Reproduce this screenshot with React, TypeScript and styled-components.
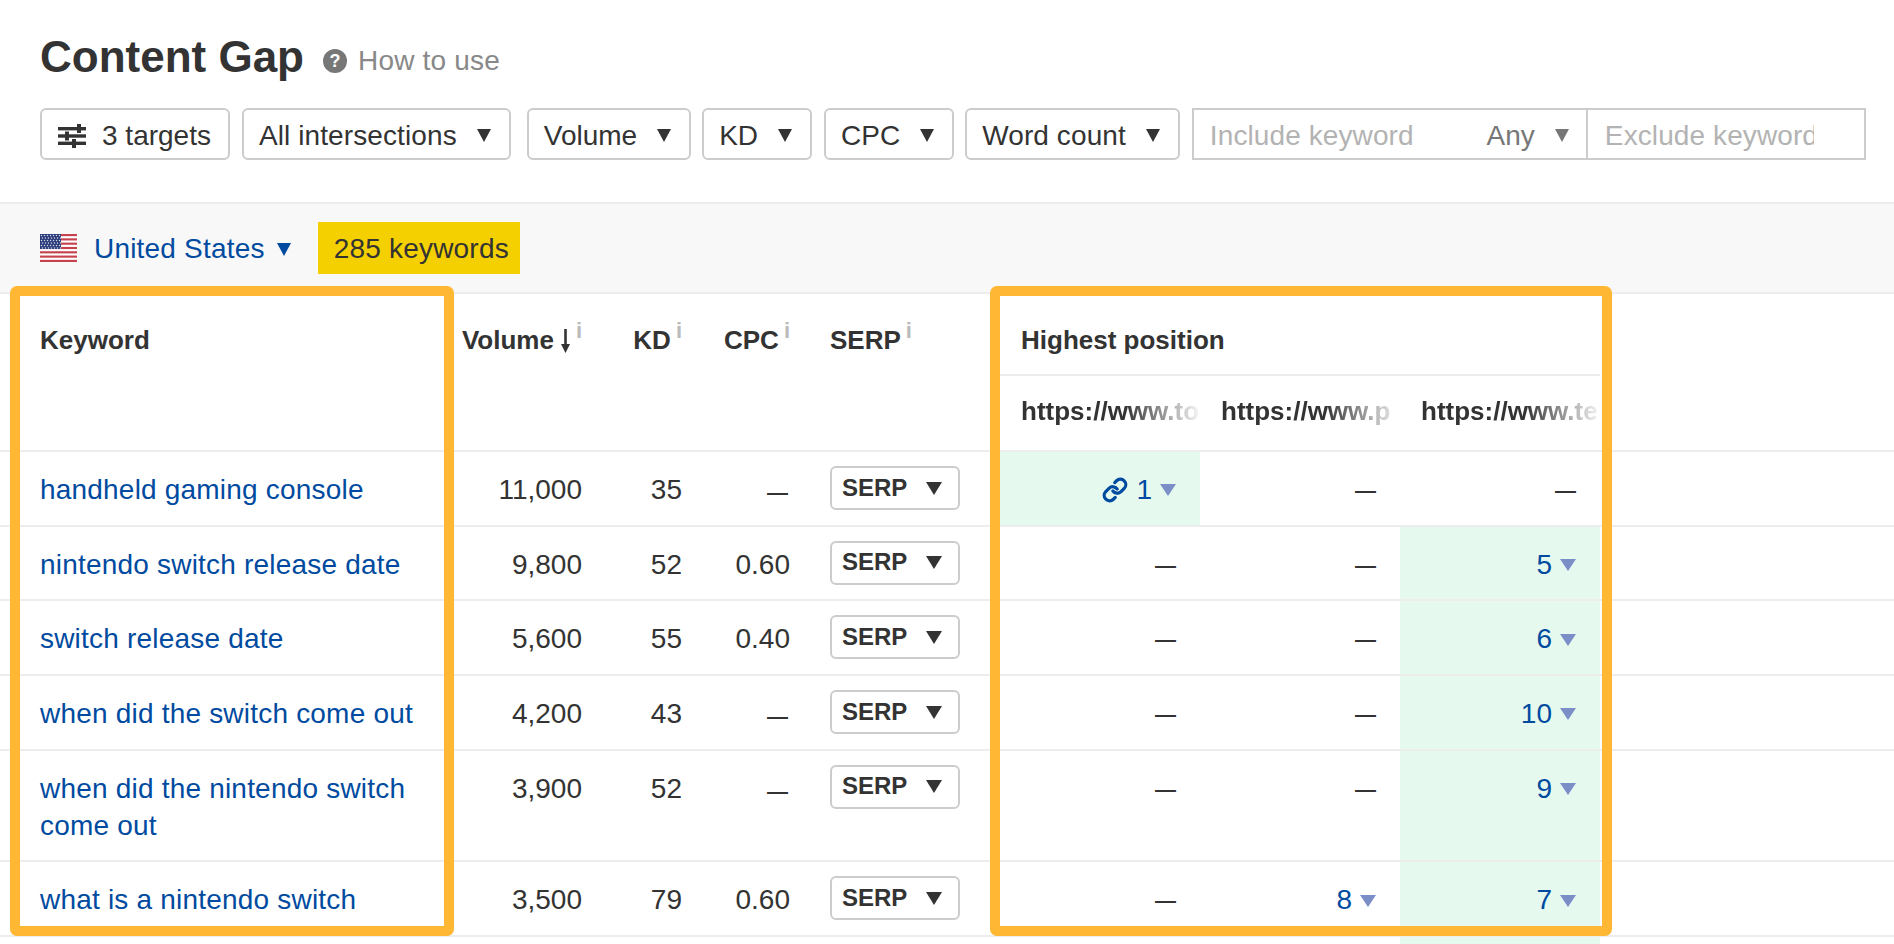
import React from 'react'
import styled, { createGlobalStyle } from 'styled-components'
import { Link as LinkIcon } from 'lucide-react'

const GlobalStyle = createGlobalStyle`
  html, body {
    margin: 0;
    padding: 0;
    height: 100%;
    overflow: hidden;
    background: #fff;
    font-family: "Liberation Sans", Arial, sans-serif;
    color: #333;
  }
`

const Page = styled.div`
  position: relative;
  width: 100%;
  height: 944px;
  overflow: hidden;
  font-size: 28px;
  letter-spacing: 0.2px;
`

const Header = styled.header`
  height: 170px;
  padding: 32px 0 0 40px;
  border-bottom: 2px solid #ededed;
`

const TitleRow = styled.div`
  display: flex;
  align-items: center;
  height: 50px;
`

const Title = styled.h1`
  margin: 0 19px 0 0;
  font-size: 44px;
  line-height: 50px;
  font-weight: 700;
  letter-spacing: 0;
  color: #333;
`

const HelpDot = styled.span`
  display: flex;
  align-items: center;
  justify-content: center;
  width: 24px;
  height: 24px;
  margin: 8px 11px 0 0;
  border-radius: 50%;
  background: #777;
  color: #fff;
  font-size: 18px;
  font-weight: 700;
`

const HowTo = styled.span`
  margin-top: 8px;
  color: #888;
`

const Filters = styled.div`
  display: flex;
  margin-top: 26px;
  letter-spacing: 0;
`

const FilterButton = styled.div<{ $gap?: number; $tracking?: number }>`
  display: flex;
  align-items: center;
  gap: 20px;
  height: 52px;
  box-sizing: border-box;
  padding: 3px 18px 0 15px;
  margin-right: ${(p) => p.$gap ?? 12}px;
  background: #fff;
  border: 2px solid #ccc;
  border-radius: 6px;
  white-space: nowrap;
  letter-spacing: ${(p) => p.$tracking ?? 0}px;
`

const TargetsButton = styled(FilterButton)`
  gap: 15px;
  padding: 3px 17px 0 16px;
`

const Caret = styled.span<{ $color?: string; $w?: number; $h?: number }>`
  flex: none;
  width: 0;
  height: 0;
  border-left: ${(p) => (p.$w ?? 15) / 2}px solid transparent;
  border-right: ${(p) => (p.$w ?? 15) / 2}px solid transparent;
  border-top: ${(p) => p.$h ?? 13}px solid ${(p) => p.$color ?? '#333'};
`

const CountryCaret = styled(Caret)`
  margin-top: 3px;
`

const KeywordFilter = styled.div`
  display: flex;
  width: 674px;
  height: 52px;
  box-sizing: border-box;
  border: 2px solid #ccc;
`

const IncludePart = styled.div`
  display: flex;
  align-items: center;
  width: 394px;
  flex: none;
  box-sizing: border-box;
  padding: 3px 17px 0 16px;
  border-right: 2px solid #ccc;
`

const Placeholder = styled.span`
  color: #b3b3b3;
  white-space: nowrap;
  letter-spacing: 0.1px;
`

const AnySelect = styled.span`
  display: flex;
  align-items: center;
  gap: 20px;
  margin-left: auto;
  color: #777;
`

const ExcludePart = styled.div`
  display: flex;
  align-items: center;
  width: 209px;
  margin-left: 17px;
  padding-top: 3px;
  overflow: hidden;
`

const Band = styled.div`
  display: flex;
  align-items: center;
  height: 88px;
  padding-left: 40px;
  background: #f8f8f8;
  border-bottom: 2px solid #ededed;
`

const Country = styled.span`
  display: flex;
  align-items: center;
  color: #004ba0;
`

const CountryName = styled.span`
  margin: 2px 12px 0 17px;
`

const KeywordCount = styled.span`
  display: flex;
  align-items: center;
  height: 52px;
  box-sizing: border-box;
  margin-left: 27px;
  padding: 2px 11px 0 16px;
  background: #f5d000;
`

const columns = '460px 140px 100px 108px 192px 200px 200px 200px 1fr'

const HeadGrid = styled.div`
  display: grid;
  grid-template-columns: ${columns};
  grid-template-rows: 82px 74px;
  border-bottom: 2px solid #ededed;
  font-size: 26px;
  font-weight: 700;
  line-height: 36.7px;
  letter-spacing: 0;
`

const HeadCell = styled.div<{ $align?: 'left' | 'right' }>`
  grid-row: 1 / span 2;
  display: flex;
  align-items: flex-start;
  justify-content: ${(p) => (p.$align === 'left' ? 'flex-start' : 'flex-end')};
  padding: 28px ${(p) => (p.$align === 'left' ? 0 : 18)}px 0 ${(p) => (p.$align === 'left' ? 22 : 0)}px;
`

const KeywordHead = styled(HeadCell)`
  padding-left: 40px;
`

const GroupHead = styled.div`
  grid-row: 1;
  grid-column: 6 / span 3;
  padding: 28px 0 0 21px;
  border-bottom: 2px solid #ededed;
`

const UrlHead = styled.div<{ $col: number }>`
  grid-row: 2;
  grid-column: ${(p) => p.$col};
  padding: 17px 0 0 21px;
  overflow: hidden;
  white-space: nowrap;
`

const UrlText = styled.span`
  display: block;
  mask-image: linear-gradient(to right, #000 58%, rgba(0, 0, 0, 0.04) 100%);
`

const InfoMark = styled.span`
  margin: -3px 0 0 5px;
  font-size: 22px;
  line-height: 24px;
  font-weight: 700;
  color: #bbb;
`

const SortArrow = styled.svg`
  width: 11px;
  height: 24px;
  margin: 7px 0 0 6px;
  flex: none;
`

const Row = styled.div`
  display: grid;
  grid-template-columns: ${columns};
  border-bottom: 2px solid #ededed;
  line-height: 36.7px;
`

const KeywordCell = styled.a`
  padding: 20px 20px 16px 40px;
  color: #004ba0;
`

const NumberCell = styled.div`
  padding: 20px 18px 16px 0;
  text-align: right;
  letter-spacing: 0;
`

const Dash = styled.span`
  font-size: 21px;
  line-height: 1;
  font-weight: 700;
  letter-spacing: 0;
  margin-right: 2px;
`

const PositionDash = styled(Dash)`
  margin-right: 0;
  line-height: 36.7px;
`

const SerpCell = styled.div`
  padding: 14px 0 0 22px;
`

const SerpButton = styled.div`
  display: flex;
  align-items: center;
  justify-content: space-between;
  width: 130px;
  height: 44px;
  box-sizing: border-box;
  padding: 0 16px 0 10px;
  border: 2px solid #ccc;
  border-radius: 6px;
  font-size: 24px;
  font-weight: 700;
  letter-spacing: 0;
`

const PositionCell = styled.div<{ $best?: boolean }>`
  display: flex;
  justify-content: flex-end;
  align-items: flex-start;
  min-height: 72.7px;
  box-sizing: border-box;
  padding: 20px 24px 16px 0;
  letter-spacing: 0;
  background: ${(p) => (p.$best ? '#e6f9ef' : 'transparent')};
`

const PositionValue = styled.span`
  display: flex;
  align-items: center;
  gap: 8px;
  height: 36.7px;
  color: #004ba0;
`

const PositionLink = styled(LinkIcon)`
  color: #004ba0;
`

const Highlight = styled.div<{ $left: number; $width: number }>`
  position: absolute;
  top: 286px;
  left: ${(p) => p.$left}px;
  width: ${(p) => p.$width}px;
  height: 650px;
  box-sizing: border-box;
  border: 10px solid rgba(255, 181, 45, 0.97);
  border-radius: 7px;
  pointer-events: none;
`

const FLAG_STRIPES = [0, 2, 4, 6, 8, 10, 12]

function UsFlag() {
  return (
    <svg width="37" height="28" viewBox="0 0 37 28" aria-hidden="true">
      <rect width="37" height="28" fill="#fff" />
      {FLAG_STRIPES.map((s) => (
        <rect key={s} y={s * 2.154} width="37" height="2.154" fill="#c4434f" />
      ))}
      <rect width="21" height="15" fill="#2b3a78" />
      {[1.5, 4, 6.500, 9, 11.500, 14].map((y, row) =>
        [1.5, 4.5, 7.5, 10.5, 13.5, 16.5, 19.5].map((x) => (
          <circle key={`${x}-${y}`} cx={x + (row % 2)} cy={y} r="0.75" fill="#d5d9ea" />
        )),
      )}
    </svg>
  )
}

function SlidersIcon() {
  return (
    <svg width="29" height="24" viewBox="0 0 29 24" fill="#333" aria-hidden="true">
      <rect x="0" y="3" width="28" height="3.4" />
      <rect x="0" y="10.3" width="28" height="3.4" />
      <rect x="0" y="17.6" width="28" height="3.4" />
      <rect x="19" y="0" width="4" height="9" />
      <rect x="7" y="7.5" width="4" height="9" />
      <rect x="14" y="15" width="4" height="9" />
    </svg>
  )
}

type Keyword = {
  name: string
  volume: string
  kd: string
  cpc: string | null
  positions: (number | null)[]
  linked?: boolean
}

const KEYWORDS: Keyword[] = [
  { name: 'handheld gaming console', volume: '11,000', kd: '35', cpc: null, positions: [1, null, null], linked: true },
  { name: 'nintendo switch release date', volume: '9,800', kd: '52', cpc: '0.60', positions: [null, null, 5] },
  { name: 'switch release date', volume: '5,600', kd: '55', cpc: '0.40', positions: [null, null, 6] },
  { name: 'when did the switch come out', volume: '4,200', kd: '43', cpc: null, positions: [null, null, 10] },
  { name: 'when did the nintendo switch come out', volume: '3,900', kd: '52', cpc: null, positions: [null, null, 9] },
  { name: 'what is a nintendo switch', volume: '3,500', kd: '79', cpc: '0.60', positions: [null, 8, 7] },
]

const FILTERS = [
  { label: 'All intersections', gap: 16, tracking: 0.1 },
  { label: 'Volume', gap: 11 },
  { label: 'KD' },
  { label: 'CPC', gap: 11 },
  { label: 'Word count', tracking: 0.1 },
]

const URLS = ['https://www.to', 'https://www.p', 'https://www.te']

export default function App() {
  return (
    <Page>
      <GlobalStyle />
      <Header>
        <TitleRow>
          <Title>Content Gap</Title>
          <HelpDot>?</HelpDot>
          <HowTo>How to use</HowTo>
        </TitleRow>
        <Filters>
          <TargetsButton>
            <SlidersIcon />
            3 targets
          </TargetsButton>
          {FILTERS.map((f) => (
            <FilterButton key={f.label} $gap={f.gap} $tracking={f.tracking}>
              {f.label}
              <Caret />
            </FilterButton>
          ))}
          <KeywordFilter>
            <IncludePart>
              <Placeholder>Include keyword</Placeholder>
              <AnySelect>
                Any
                <Caret $color="#777" />
              </AnySelect>
            </IncludePart>
            <ExcludePart>
              <Placeholder>Exclude keyword</Placeholder>
            </ExcludePart>
          </KeywordFilter>
        </Filters>
      </Header>

      <Band>
        <Country>
          <UsFlag />
          <CountryName>United States</CountryName>
          <CountryCaret $color="#004ba0" />
        </Country>
        <KeywordCount>285 keywords</KeywordCount>
      </Band>

      <HeadGrid>
        <KeywordHead $align="left">Keyword</KeywordHead>
        <HeadCell>
          Volume
          <SortArrow viewBox="0 0 11 24" aria-hidden="true">
            <path d="M5.500 0v18" stroke="#333" strokeWidth="2.6" />
            <path d="M1 15h9l-4.500 9z" fill="#333" />
          </SortArrow>
          <InfoMark>i</InfoMark>
        </HeadCell>
        <HeadCell>
          KD<InfoMark>i</InfoMark>
        </HeadCell>
        <HeadCell>
          CPC<InfoMark>i</InfoMark>
        </HeadCell>
        <HeadCell $align="left">
          SERP<InfoMark>i</InfoMark>
        </HeadCell>
        <GroupHead>Highest position</GroupHead>
        {URLS.map((u, i) => (
          <UrlHead key={u} $col={6 + i}>
            <UrlText>{u}</UrlText>
          </UrlHead>
        ))}
      </HeadGrid>

      {KEYWORDS.map((k) => (
        <Row key={k.name}>
          <KeywordCell>{k.name}</KeywordCell>
          <NumberCell>{k.volume}</NumberCell>
          <NumberCell>{k.kd}</NumberCell>
          <NumberCell>{k.cpc ?? <Dash>—</Dash>}</NumberCell>
          <SerpCell>
            <SerpButton>
              SERP
              <Caret $w={16} />
            </SerpButton>
          </SerpCell>
          {k.positions.map((pos, i) => (
            <PositionCell key={i} $best={pos !== null && (k.linked || i === k.positions.length - 1)}>
              {pos === null ? (
                <PositionDash>—</PositionDash>
              ) : (
                <PositionValue>
                  {k.linked && <PositionLink size={26} strokeWidth={3} />}
                  {pos}
                  <Caret $color="#7b8ec8" $w={16} $h={12} />
                </PositionValue>
              )}
            </PositionCell>
          ))}
        </Row>
      ))}
      <Row>
        <KeywordCell />
        <NumberCell />
        <NumberCell />
        <NumberCell />
        <SerpCell />
        <PositionCell />
        <PositionCell />
        <PositionCell $best />
      </Row>

      <Highlight $left={10} $width={444} />
      <Highlight $left={990} $width={622} />
    </Page>
  )
}
